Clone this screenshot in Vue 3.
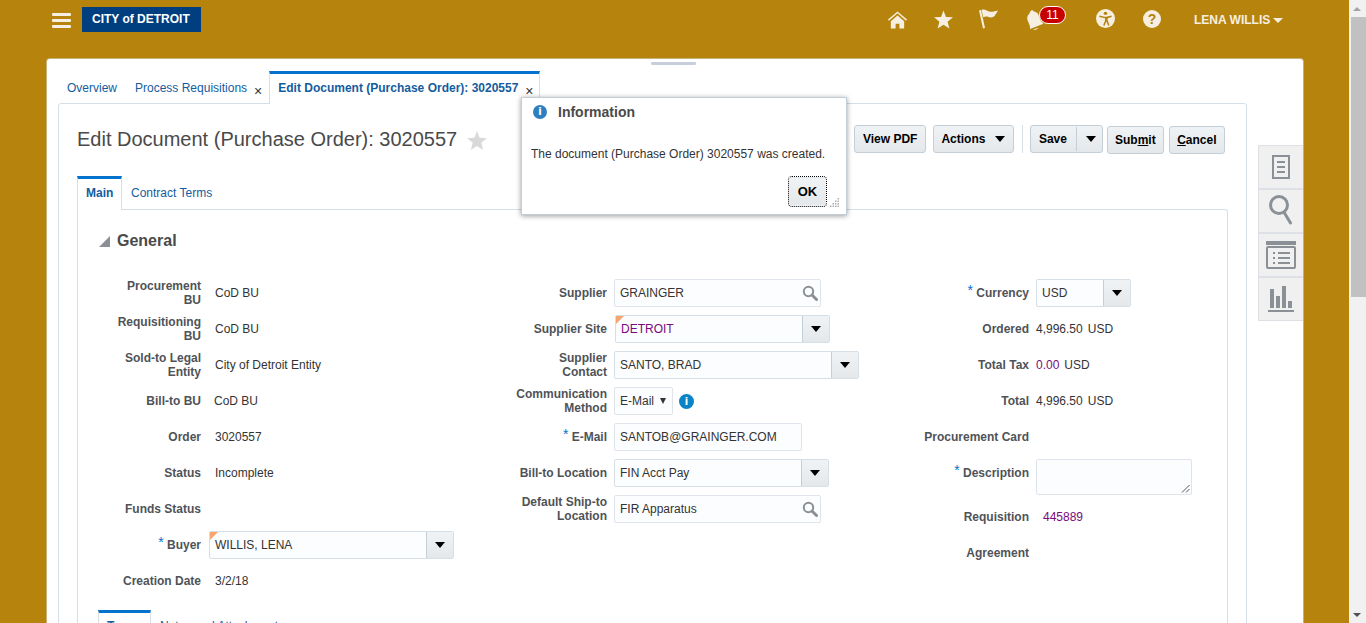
<template>
	<div class="screen">
		<div class="page">
			<!-- Global header -->
			<header class="topbar">
				<div class="burger"><span></span><span></span><span></span></div>
				<div class="logo">CITY of DETROIT</div>
				<nav class="global-icons">
					<svg class="gi gi-home" viewBox="0 0 20 18"><path d="M10 0 0 8.5l1 1.2L10 2l9 7.700 1-1.200z" /><path d="M3 10.200 10 4.200l7 6V18h-5v-5H8v5H3z" /></svg>
					<svg class="gi gi-star" viewBox="0 0 20 19"><path d="m10 0 2.600 6.800 7.400.4-5.700 4.600 1.900 7.200L10 15l-6.200 4 1.900-7.200L0 7.200l7.400-.4z" /></svg>
					<svg class="gi gi-flag" viewBox="0 0 20 20"><path d="M0 1.500 2 1l4 18-2 .5z" /><path d="M2.500 1C6 -.5 8 2.500 11 2.800c3 .3 5-.8 8-1.300-1 2-2.500 3.500-3 5-1.500 2-4 2.500-6.500 1.500-2-.8-3.500-.6-5.200.2z" /></svg>
					<div class="bell">
						<svg viewBox="0 0 18 20"><path d="M4 .8c1-.8 2.200-.5 2.800.6 3.500.3 5 3 5.700 6.200.5 2.500 1.800 4.300 4 6.100L3 19c.3-2.600-.6-4.800-1.800-7C-.2 9.200-.3 6 2.300 3.800 2.700 2.800 3.200 1.500 4 .8z" /><path d="M6 19.500c2 .8 4.500-.2 5.500-1.800z" /></svg>
						<span class="badge">11</span>
					</div>
					<svg class="gi gi-round" viewBox="0 0 20 20"><circle cx="10" cy="10" r="10" /><g fill="#b5830c"><circle cx="10" cy="4.600" r="1.800" /><path d="M3.800 6.900 9 8.100h2l5.200-1.200.4 1.400-4.300 1.500v2.400l2 4.900-1.400.5-2-4.500h-.1l-1.800 4.500-1.500-.5 2-4.900V9.800L3.400 8.300z" /></g></svg>
					<div class="help">?</div>
					<div class="user">LENA WILLIS<i class="user-caret"></i></div>
				</nav>
			</header>

			<main class="card">
				<div class="grip"></div>

				<!-- Open task tabs -->
				<div class="task-tabs">
					<span class="task-tab">Overview</span>
					<span class="task-tab">Process Requisitions<b class="close">×</b></span>
					<span class="task-tab active">Edit Document (Purchase Order): 3020557<b class="close">×</b></span>
				</div>

				<div class="work-row">
					<section class="panel">
						<div class="title-row">
							<h1>Edit Document (Purchase Order): 3020557</h1>
							<svg class="fav" viewBox="0 0 20 19"><path d="m10 0 2.600 6.800 7.400.4-5.700 4.600 1.900 7.200L10 15l-6.200 4 1.900-7.200L0 7.200l7.400-.4z" /></svg>
							<div class="toolbar">
								<button class="btn">View PDF</button>
								<button class="btn">Actions<i class="caret ml"></i></button>
								<span class="sep"></span>
								<div class="btn split"><span>Save</span><span class="split-arrow"><i class="caret"></i></span></div>
								<button class="btn low submit">Sub<u>m</u>it</button>
								<button class="btn low"><u>C</u>ancel</button>
							</div>
						</div>

						<div class="sub-tabs">
							<span class="sub-tab active">Main</span>
							<span class="sub-tab">Contract Terms</span>
						</div>

						<div class="sub-panel">
							<h2 class="section"><i class="disclosure"></i>General</h2>

							<div class="form">
								<!-- Left column -->
								<div class="col col-a">
									<div class="row" v-for="row in leftRows" :key="row.label">
										<label>{{ row.label }}</label>
										<span class="val" :class="row.cls">{{ row.value }}</span>
									</div>
									<div class="row">
										<label><em>*</em> Buyer</label>
										<div class="field select changed buyer"><span>WILLIS, LENA</span><span class="arrow"><i class="caret"></i></span></div>
									</div>
									<div class="row">
										<label>Creation Date</label>
										<span class="val">3/2/18</span>
									</div>
								</div>

								<!-- Middle column -->
								<div class="col col-b">
									<div class="row">
										<label>Supplier</label>
										<div class="field search w207"><span>GRAINGER</span><svg class="lens" viewBox="0 0 16 16"><circle cx="6.500" cy="6.500" r="4.700" /><path d="m10 10 4.500 4.500" class="handle" /></svg></div>
									</div>
									<div class="row">
										<label>Supplier Site</label>
										<div class="field select changed site"><span class="purple">DETROIT</span><span class="arrow"><i class="caret"></i></span></div>
									</div>
									<div class="row">
										<label>Supplier Contact</label>
										<div class="field select contact"><span>SANTO, BRAD</span><span class="arrow"><i class="caret"></i></span></div>
									</div>
									<div class="row">
										<label>Communication Method</label>
										<div class="field native"><span>E-Mail</span><i class="mini-caret"></i></div>
										<span class="info-dot">i</span>
									</div>
									<div class="row">
										<label><em>*</em> E-Mail</label>
										<div class="field w188"><span>SANTOB@GRAINGER.COM</span></div>
									</div>
									<div class="row">
										<label>Bill-to Location</label>
										<div class="field select billto"><span>FIN Acct Pay</span><span class="arrow"><i class="caret"></i></span></div>
									</div>
									<div class="row">
										<label>Default Ship-to Location</label>
										<div class="field search w207"><span>FIR Apparatus</span><svg class="lens" viewBox="0 0 16 16"><circle cx="6.500" cy="6.500" r="4.700" /><path d="m10 10 4.500 4.500" class="handle" /></svg></div>
									</div>
								</div>

								<!-- Right column -->
								<div class="col col-c">
									<div class="row">
										<label><em>*</em> Currency</label>
										<div class="field select currency"><span>USD</span><span class="arrow"><i class="caret"></i></span></div>
									</div>
									<div class="row" v-for="row in amountRows" :key="row.label">
										<label>{{ row.label }}</label>
										<span class="val" :class="row.cls">{{ row.amount }}</span>
										<span class="val unit">USD</span>
									</div>
									<div class="row">
										<label>Procurement Card</label>
									</div>
									<div class="row row-desc">
										<label><em>*</em> Description</label>
										<div class="textarea">
											<svg viewBox="0 0 9 9"><path d="M8.500 1 1 8.500M8.500 5 5 8.500" /></svg>
										</div>
									</div>
									<div class="row">
										<label>Requisition</label>
										<span class="val purple req">445889</span>
									</div>
									<div class="row">
										<label>Agreement</label>
									</div>
								</div>
							</div>

							<div class="lower-tabs">
								<span class="lower-tab active">Terms</span>
								<span class="lower-tab">Notes and Attachments</span>
							</div>
						</div>
					</section>

					<!-- Side drawer -->
					<aside class="drawer">
						<div class="drawer-item">
							<svg class="doc" viewBox="0 0 18 24"><rect x="1" y="1" width="16" height="22" class="line" /><path d="M5 7h8M5 12h8M5 17h8" class="line" /></svg>
						</div>
						<div class="drawer-item">
							<svg class="tall" viewBox="0 0 24 32"><circle cx="10" cy="10" r="8.500" class="line thick" /><path d="m15.500 18 6 10" class="line thick" /></svg>
						</div>
						<div class="drawer-item">
							<svg class="table" viewBox="0 0 30 28"><path d="M0 0h30v4H0z" class="solid" /><rect x="1" y="6" width="28" height="21" rx="1" class="line" /><path d="M7 12h2M12 12h12M7 17h2M12 17h12M7 22h2M12 22h12" class="line" /></svg>
						</div>
						<div class="drawer-item">
							<svg class="bars" viewBox="0 0 26 26"><path d="M2 3h4v19H2zM8 10h4v12H8zM14 0h4v22h-4zM20 15h4v7h-4zM0 24h26v2H0z" class="solid" /></svg>
						</div>
					</aside>
				</div>
			</main>

			<!-- Information popup -->
			<div class="dialog">
				<div class="dialog-title">
					<span class="dialog-icon">i</span>
					<span>Information</span>
				</div>
				<p>The document (Purchase Order) 3020557 was created.</p>
				<div class="dialog-foot">
					<button class="btn ok">OK</button>
				</div>
				<svg class="resize" viewBox="0 0 10 10"><path d="M7.500 0H9v1.500H7.500zM5 2.500h1.500V4H5zM7.500 2.500H9V4H7.500zM2.500 5H4v1.500H2.500zM5 5h1.500v1.500H5zM7.500 5H9v1.500H7.500zM0 7.500h1.500V9H0zM2.500 7.500H4V9H2.500zM5 7.500h1.500V9H5zM7.500 7.500H9V9H7.500z" /></svg>
			</div>
		</div>

		<!-- Browser scrollbar -->
		<div class="scrollbar">
			<i class="up"></i>
			<div class="thumb"></div>
			<i class="down"></i>
		</div>
	</div>
</template>

<script setup>
const leftRows = [
	{ label: 'Procurement BU', value: 'CoD BU' },
	{ label: 'Requisitioning BU', value: 'CoD BU' },
	{ label: 'Sold-to Legal Entity', value: 'City of Detroit Entity' },
	{ label: 'Bill-to BU', value: 'CoD BU', cls: 'nudge' },
	{ label: 'Order', value: '3020557' },
	{ label: 'Status', value: 'Incomplete' },
	{ label: 'Funds Status', value: '' },
]

const amountRows = [
	{ label: 'Ordered', amount: '4,996.50' },
	{ label: 'Total Tax', amount: '0.00', cls: 'purple' },
	{ label: 'Total', amount: '4,996.50' },
]
</script>

<style>
html,
body {
	margin: 0;
	overflow: hidden;
}
</style>

<style scoped>
.screen {
	display: flex;
	height: 623px;
	overflow: hidden;
	font-family: 'Liberation Sans', Arial, sans-serif;
	font-size: 12px;
	color: #333;
}

.page {
	position: relative;
	flex: 1;
	min-width: 0;
	background: #b6840c;
	overflow: hidden;
}

/* ── Header ─────────────────────────────────────────────────── */
.topbar {
	display: flex;
	align-items: flex-start;
	height: 59px;
	padding: 7px 0 0 52px;
	box-sizing: border-box;
}

.burger {
	display: flex;
	flex-direction: column;
	gap: 3px;
	width: 19px;
	margin: 6px 11px 0 0;
}

.burger span {
	height: 3px;
	border-radius: 1px;
	background: #f6efe1;
}

.logo {
	width: 109px;
	height: 25px;
	padding-left: 10px;
	background: #003f7f;
	color: #fff;
	font-size: 12px;
	font-weight: 700;
	line-height: 25px;
}

.global-icons {
	display: flex;
	align-items: flex-start;
	margin-left: 687px;
	color: #f6efe1;
}

.gi {
	display: block;
	fill: #f6efe1;
}

.gi-home {
	width: 19px;
	height: 18px;
	margin-top: 4px;
}

.gi-star {
	width: 19px;
	height: 19px;
	margin: 3px 0 0 27px;
}

.gi-flag {
	width: 20px;
	height: 20px;
	margin: 2px 0 0 26px;
}

.bell {
	position: relative;
	width: 18px;
	height: 20px;
	margin: 3px 0 0 28px;
}

.bell svg {
	display: block;
	fill: #f6efe1;
}

.badge {
	position: absolute;
	top: -4px;
	left: 12px;
	width: 25px;
	height: 16px;
	border: 1px solid #fff;
	border-radius: 9px;
	background: #c70000;
	color: #fff;
	font-size: 12px;
	line-height: 16px;
	text-align: center;
}

.gi-round {
	width: 19px;
	height: 19px;
	margin: 2px 0 0 51px;
}

.help {
	width: 18px;
	height: 18px;
	margin: 3px 0 0 28px;
	border-radius: 50%;
	background: #f6efe1;
	color: #b5830c;
	font-size: 14px;
	font-weight: 700;
	line-height: 18px;
	text-align: center;
}

.user {
	display: flex;
	align-items: center;
	margin: 6px 0 0 33px;
	color: #f6efe1;
	font-weight: 700;
	line-height: 14px;
}

.user-caret {
	margin-left: 3px;
	border-top: 5px solid #f6efe1;
	border-left: 5px solid transparent;
	border-right: 5px solid transparent;
}

/* ── Card and tabs ──────────────────────────────────────────── */
.card {
	position: relative;
	width: 1256px;
	height: 564px;
	margin-left: 47px;
	box-sizing: border-box;
	padding: 12px 0 0 11px;
	border-radius: 3px 3px 0 0;
	background: #fff;
	box-shadow: 0 0 0 1px rgba(214, 223, 230, 0.5);
	overflow: hidden;
}

.grip {
	position: absolute;
	top: 3px;
	left: 604px;
	width: 45px;
	height: 3px;
	border-radius: 1px;
	background: #c8cfdc;
}

.task-tabs {
	display: flex;
	height: 32px;
	align-items: stretch;
}

.task-tab {
	position: relative;
	padding: 8px 0 0 9px;
	margin-right: 9px;
	color: #145c9e;
	line-height: 18px;
}

.task-tab .close {
	display: inline-block;
	margin-left: 7px;
	color: #333;
	font-size: 14px;
	font-weight: 400;
	line-height: 12px;
	vertical-align: -4px;
}

.task-tab.active {
	z-index: 1;
	height: 33px;
	box-sizing: border-box;
	margin-left: -2px;
	padding: 5px 5px 0 8px;
	border: 1px solid #d6dfe6;
	border-top: 3px solid #0572ce;
	border-bottom: 0;
	background: #fff;
	font-weight: 700;
	color: #145c9e;
}

.work-row {
	display: flex;
	align-items: flex-start;
}

.panel {
	width: 1189px;
	height: 530px;
	box-sizing: border-box;
	padding: 0 18px;
	border: 1px solid #d6dfe6;
	border-radius: 3px 3px 0 0;
	flex: none;
}

.title-row {
	display: flex;
	align-items: center;
	height: 70px;
}

h1 {
	margin: 0;
	color: #4a4a4a;
	font-size: 20px;
	font-weight: 400;
	line-height: 26px;
}

.fav {
	width: 20px;
	height: 19px;
	margin: 3px 0 0 10px;
	fill: #d9d9d9;
}

.toolbar {
	display: flex;
	align-items: center;
	margin-left: auto;
	margin-right: 3px;
	gap: 7px;
}

.btn {
	display: inline-flex;
	align-items: center;
	height: 28px;
	box-sizing: border-box;
	padding: 0 7.5px;
	border: 1px solid #c4ced7;
	border-radius: 3px;
	background: linear-gradient(#f0f3f5, #e4e8ea);
	color: #000;
	font-family: inherit;
	font-size: 12px;
	font-weight: 700;
}

.btn.low {
	margin-top: 2px;
}

.btn.submit {
	margin-right: -2px;
	padding: 0 7px;
}

.caret {
	display: inline-block;
	border-top: 6px solid #000;
	border-left: 5px solid transparent;
	border-right: 5px solid transparent;
}

.caret.ml {
	margin-left: 10px;
}

.sep {
	width: 1px;
	height: 28px;
	margin: 0 0 0 1px;
	background: #d6dfe6;
}

.split {
	padding: 0;
	margin-right: -3px;
}

.split > span:first-child {
	padding: 0 9px 0 8px;
}

.split-arrow {
	display: flex;
	align-items: center;
	height: 24px;
	padding: 0 6px 0 9px;
	border-left: 1px solid #c4ced7;
}

.sub-tabs {
	display: flex;
	height: 33px;
	margin-top: 2px;
}

.sub-tab {
	padding: 9px 9px 0 9px;
	color: #145c9e;
	line-height: 16px;
}

.sub-tab.active {
	z-index: 1;
	box-sizing: border-box;
	width: 45px;
	height: 34px;
	padding: 6px 0 0 8px;
	border: 1px solid #d6dfe6;
	border-top: 3px solid #0572ce;
	border-bottom: 0;
	background: #fff;
	font-weight: 700;
}

.sub-panel {
	position: relative;
	height: 420px;
	box-sizing: border-box;
	width: 1151px;
	padding: 20px 20px 0 21px;
	border: 1px solid #d6dfe6;
	border-bottom: 0;
	border-radius: 0 3px 0 0;
}

.section {
	display: flex;
	align-items: center;
	height: 22px;
	margin: 0;
	color: #4a4a4a;
	font-size: 16px;
	font-weight: 700;
}

.disclosure {
	width: 0;
	height: 0;
	margin-right: 7px;
	border-bottom: 11px solid #8a9096;
	border-left: 11px solid transparent;
}

/* ── Form ───────────────────────────────────────────────────── */
.form {
	display: flex;
	margin-top: 23px;
	margin-left: -1px;
}

.col {
	flex: none;
}

.col-a {
	width: 406px;
}

.col-b {
	width: 420px;
}

.row {
	display: flex;
	align-items: center;
	height: 36px;
}

label {
	flex: none;
	box-sizing: border-box;
	color: #4f5358;
	font-weight: 700;
	line-height: 14px;
	text-align: right;
}

label em {
	color: #0572ce;
	font-size: 14px;
	font-style: normal;
	font-weight: 400;
	line-height: 0;
	vertical-align: 2px;
}

.col-a label {
	width: 90px;
	margin: 0 14px 0 13px;
}

.col-b label {
	width: 92px;
	margin: 0 7px 0 11px;
}

.col-c label {
	width: 105px;
	margin-right: 7px;
}

.val.nudge {
	margin-left: -1px;
}

.purple {
	color: #7a0a7a;
}

.unit {
	margin-left: 5px;
}

.req {
	margin-left: 7px;
}

.field {
	position: relative;
	display: flex;
	align-items: center;
	height: 28px;
	box-sizing: border-box;
	padding-left: 5px;
	border: 1px solid #dfe4ea;
	border-radius: 2px;
	background: #fcfdfe;
}

.w207 {
	width: 207px;
}

.w188 {
	width: 188px;
}

.select > span:first-child {
	flex: 1;
}

.arrow {
	display: flex;
	align-items: center;
	justify-content: center;
	width: 26px;
	height: 26px;
	border-left: 1px solid #c4ced7;
	background: linear-gradient(#f0f3f5, #e4e8ea);
}

.select {
	border-color: #d6dfe6;
}

.changed::before {
	content: '';
	position: absolute;
	top: 0;
	left: 0;
	border-top: 8px solid #f6a56f;
	border-right: 8px solid transparent;
}

.buyer {
	width: 245px;
	margin-left: -6px;
}

.site {
	width: 215px;
	margin-left: 1px;
}

.contact {
	width: 245px;
}

.billto {
	width: 215px;
}

.currency {
	width: 95px;
}

.native {
	width: 59px;
}

.mini-caret {
	margin-left: 6px;
	border-top: 6px solid #333;
	border-left: 3.500px solid transparent;
	border-right: 3.500px solid transparent;
}

.info-dot {
	width: 15px;
	height: 15px;
	margin-left: 6px;
	border-radius: 50%;
	background: #0a84c6;
	color: #fff;
	font-family: 'DejaVu Sans', sans-serif;
	font-size: 10px;
	font-weight: 700;
	line-height: 15px;
	text-align: center;
}

.lens {
	position: absolute;
	top: 5px;
	right: 2px;
	width: 16px;
	height: 16px;
	fill: none;
	stroke: #8a9096;
	stroke-width: 2;
}

.lens .handle {
	stroke-width: 3;
	stroke-linecap: round;
}

.row-desc {
	height: 36px;
	margin-bottom: 8px;
	align-items: flex-start;
}

.row-desc label {
	margin-top: 11px;
}

.textarea {
	position: relative;
	width: 156px;
	height: 36px;
	box-sizing: border-box;
	margin-top: 4px;
	border: 1px solid #dfe4ea;
	border-radius: 2px;
	background: #fcfdfe;
}

.textarea svg {
	position: absolute;
	right: 1px;
	bottom: 1px;
	width: 9px;
	height: 9px;
	fill: none;
	stroke: #555;
}

.lower-tabs {
	display: flex;
	margin: 11px 0 0 -1px;
}

.lower-tab {
	padding: 9px 9px 0;
	color: #145c9e;
}

.lower-tab.active {
	box-sizing: border-box;
	width: 53px;
	height: 40px;
	padding: 6px 0 0 8px;
	border: 1px solid #d6dfe6;
	border-top: 3px solid #0572ce;
	font-weight: 700;
}

/* ── Drawer ─────────────────────────────────────────────────── */
.drawer {
	display: flex;
	flex-direction: column;
	flex: none;
	width: 45px;
	margin: 42px 0 0 11px;
}

.drawer-item {
	display: flex;
	align-items: center;
	justify-content: center;
	box-sizing: border-box;
	height: 44px;
	border: 1px solid #dde1e5;
	border-width: 1px 0 1px 1px;
	background: #f0f0f0;
}

.drawer-item svg {
	display: block;
}

.drawer-item .doc {
	width: 18px;
	height: 24px;
}

.drawer-item .tall {
	width: 24px;
	height: 32px;
}

.drawer-item .table {
	width: 30px;
	height: 28px;
}

.drawer-item .bars {
	width: 26px;
	height: 26px;
}

.line {
	fill: none;
	stroke: #8a9096;
	stroke-width: 2;
}

.line.thick {
	stroke-width: 3;
	stroke-linecap: round;
}

.solid {
	fill: #8a9096;
}

/* ── Dialog ─────────────────────────────────────────────────── */
.dialog {
	position: absolute;
	top: 97px;
	left: 521px;
	width: 326px;
	height: 118px;
	box-sizing: border-box;
	z-index: 5;
	border: 1px solid #c4ced7;
	background: #fff;
	box-shadow: 0 1px 5px rgba(0, 0, 0, 0.4);
}

.dialog-title {
	display: flex;
	align-items: center;
	gap: 11px;
	height: 27px;
	padding-left: 11px;
	color: #4a4a4a;
	font-size: 14px;
	font-weight: 700;
}

.dialog-icon {
	width: 14px;
	height: 14px;
	border-radius: 50%;
	background: #2d7fc0;
	color: #fff;
	font-family: 'DejaVu Sans', sans-serif;
	font-size: 10px;
	line-height: 14px;
	text-align: center;
}

.dialog p {
	margin: 21px 0 0 9px;
	line-height: 16px;
}

.dialog-foot {
	display: flex;
	justify-content: flex-end;
	margin: 15px 20px 0 0;
}

.ok {
	width: 37px;
	height: 29px;
	padding: 0;
	justify-content: center;
	border-color: transparent;
	outline: 1px dotted #000;
	outline-offset: 0;
	font-size: 13px;
}

.resize {
	position: absolute;
	right: 6px;
	bottom: 6px;
	width: 10px;
	height: 10px;
	fill: #aab0b6;
}

/* ── Scrollbar ──────────────────────────────────────────────── */
.scrollbar {
	position: relative;
	flex: none;
	width: 17px;
	background: #f1f1f1;
}

.thumb {
	position: absolute;
	top: 17px;
	left: 2px;
	width: 15px;
	height: 280px;
	background: #c1c1c1;
}

.up,
.down {
	position: absolute;
	left: 4px;
	border-left: 4px solid transparent;
	border-right: 4px solid transparent;
}

.up {
	top: 7px;
	border-bottom: 4px solid #a3a3a3;
}

.down {
	bottom: 6px;
	border-top: 4px solid #505050;
}
</style>
